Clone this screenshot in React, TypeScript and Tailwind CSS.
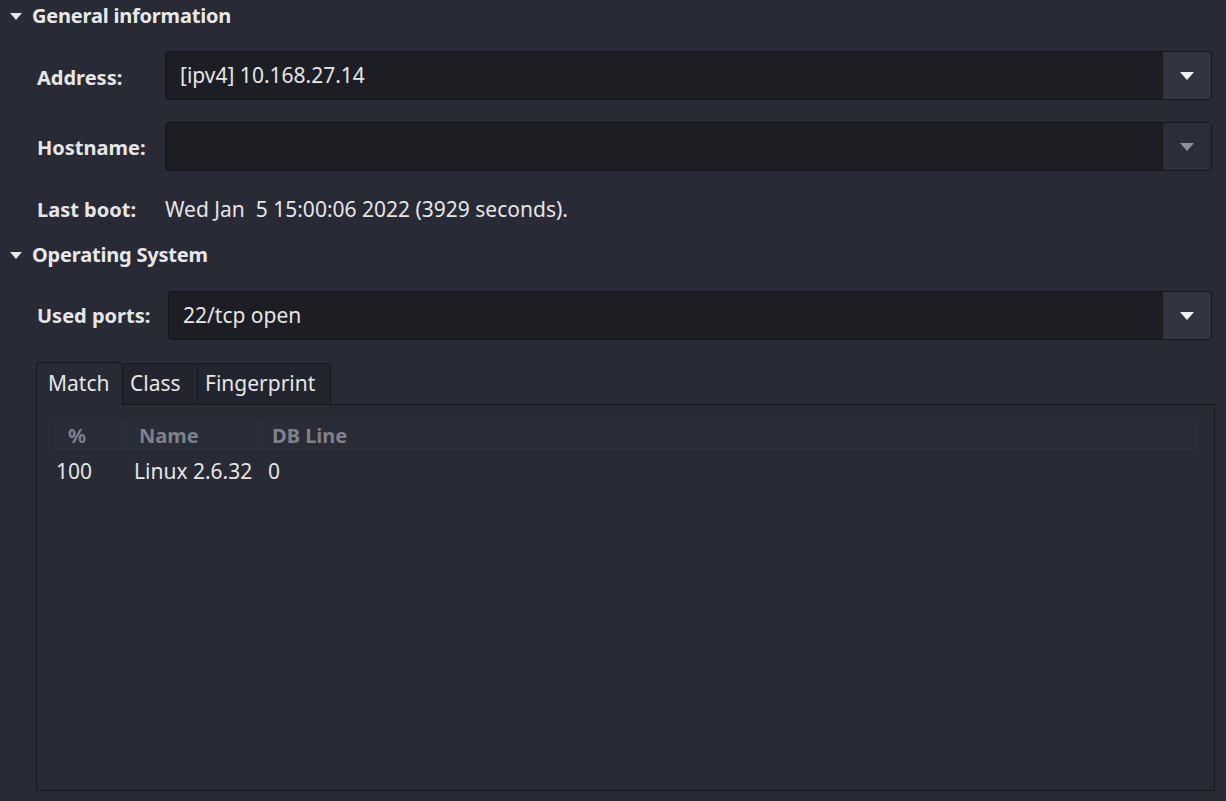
import React from "react";

const font = { fontFamily: '"Noto Sans", "Open Sans", sans-serif' };

function Caret({ dim }: { dim?: boolean }) {
    return (
        <svg width="14" height="8" viewBox="0 0 14 8">
            <path d="M0 0h14L7 8z" fill={dim ? "#8f9199" : "#f2f2f2"} />
        </svg>
    );
}

function Section({ title }: { title: string }) {
    return (
        <div className="flex items-center h-[32px] pl-[10px] gap-[10px]">
            <svg width="12" height="7" viewBox="0 0 12 7">
                <path d="M0 0h12L6 7z" fill="#e8e8e8" />
            </svg>
            <span className="text-[20px] font-bold text-[#e8e8e8] tracking-[-0.2px]">{title}</span>
        </div>
    );
}

function Combo({ value, dim }: { value: string; dim?: boolean }) {
    return (
        <div className="flex flex-1 h-[49px] rounded-[4px] bg-[#1c1e24] border border-[#15161b] overflow-hidden">
            <div className="flex-1 flex items-center px-[14px] text-[21px] text-[#e6e6e6]">{value}</div>
            <div
                className={`w-[49px] flex items-center justify-center border-l border-[#17181d] ${dim ? "bg-[#2b2d38]" : "bg-[#32343f]"}`}
            >
                <Caret dim={dim} />
            </div>
        </div>
    );
}

export default function App() {
    const tabs = [
        { t: "Match", w: "w-[87px] pl-[11px]" },
        { t: "Class", w: "w-[75px] pl-[7px]" },
        { t: "Fingerprint", w: "w-[133px] pl-[7px]" },
    ];
    return (
        <div style={font} className="w-[1226px] h-[801px] bg-[#282a36] text-[#e6e6e6] overflow-hidden">
            <Section title="General information" />
            <div className="pl-[37px] pr-[14px]">
                <div className="flex items-center mt-[19px]">
                    <span className="w-[128px] text-[20px] font-bold pt-[4px]">Address:</span>
                    <Combo value="[ipv4] 10.168.27.14" />
                </div>
                <div className="flex items-center mt-[22px]">
                    <span className="w-[128px] text-[20px] font-bold pt-[2px]">Hostname:</span>
                    <Combo value="" dim />
                </div>
                <div className="flex items-center h-[40px] mt-[19px]">
                    <span className="w-[128px] text-[20px] font-bold">Last boot:</span>
                    <span className="text-[21px]">Wed Jan&nbsp; 5 15:00:06 2022 (3929 seconds).</span>
                </div>
            </div>
            <div className="mt-[9px]">
                <Section title="Operating System" />
            </div>
            <div className="pl-[37px] pr-[14px] mt-[20px]">
                <div className="flex items-center">
                    <span className="w-[131px] text-[20px] font-bold">Used ports:</span>
                    <Combo value="22/tcp open" />
                </div>
            </div>
            <div className="ml-[36px] mr-[11px] mt-[21px] flex flex-col h-[430px]">
                <div className="flex items-end h-[43px]">
                    {tabs.map((x, i) => (
                        <div
                            key={x.t}
                            className={
                                i === 0
                                    ? `${x.w} h-[43px] flex items-center text-[21px] bg-[#282a36] border border-b-0 border-[#17181d] rounded-t-[4px] -mb-px z-10`
                                    : `${x.w} h-[41px] flex items-center text-[21px] bg-[#22242e] border border-b-0 border-l-0 border-[#17181d] rounded-tr-[4px]`
                            }
                        >
                            {x.t}
                        </div>
                    ))}
                </div>
                <div className="flex-1 border border-[#17181d] bg-[#282a36] pt-[15px] px-[16px]">
                    <div className="flex h-[33px] items-center text-[20px] font-bold text-[#7f818a] border-b border-[#22242d] bg-[#2a2c38]">
                        <div className="w-[73px] pl-[15px] border-r border-[#2f313d] h-full flex items-center">%</div>
                        <div className="w-[133px] pl-[13px] border-r border-[#2f313d] h-full flex items-center">Name</div>
                        <div className="flex-1 pl-[13px] h-full flex items-center">DB Line</div>
                    </div>
                    <div className="flex h-[38px] items-center text-[21px]">
                        <div className="w-[79px] pl-[3px]">100</div>
                        <div className="w-[136px] pl-[2px]">Linux 2.6.32</div>
                        <div>0</div>
                    </div>
                </div>
            </div>
        </div>
    );
}
